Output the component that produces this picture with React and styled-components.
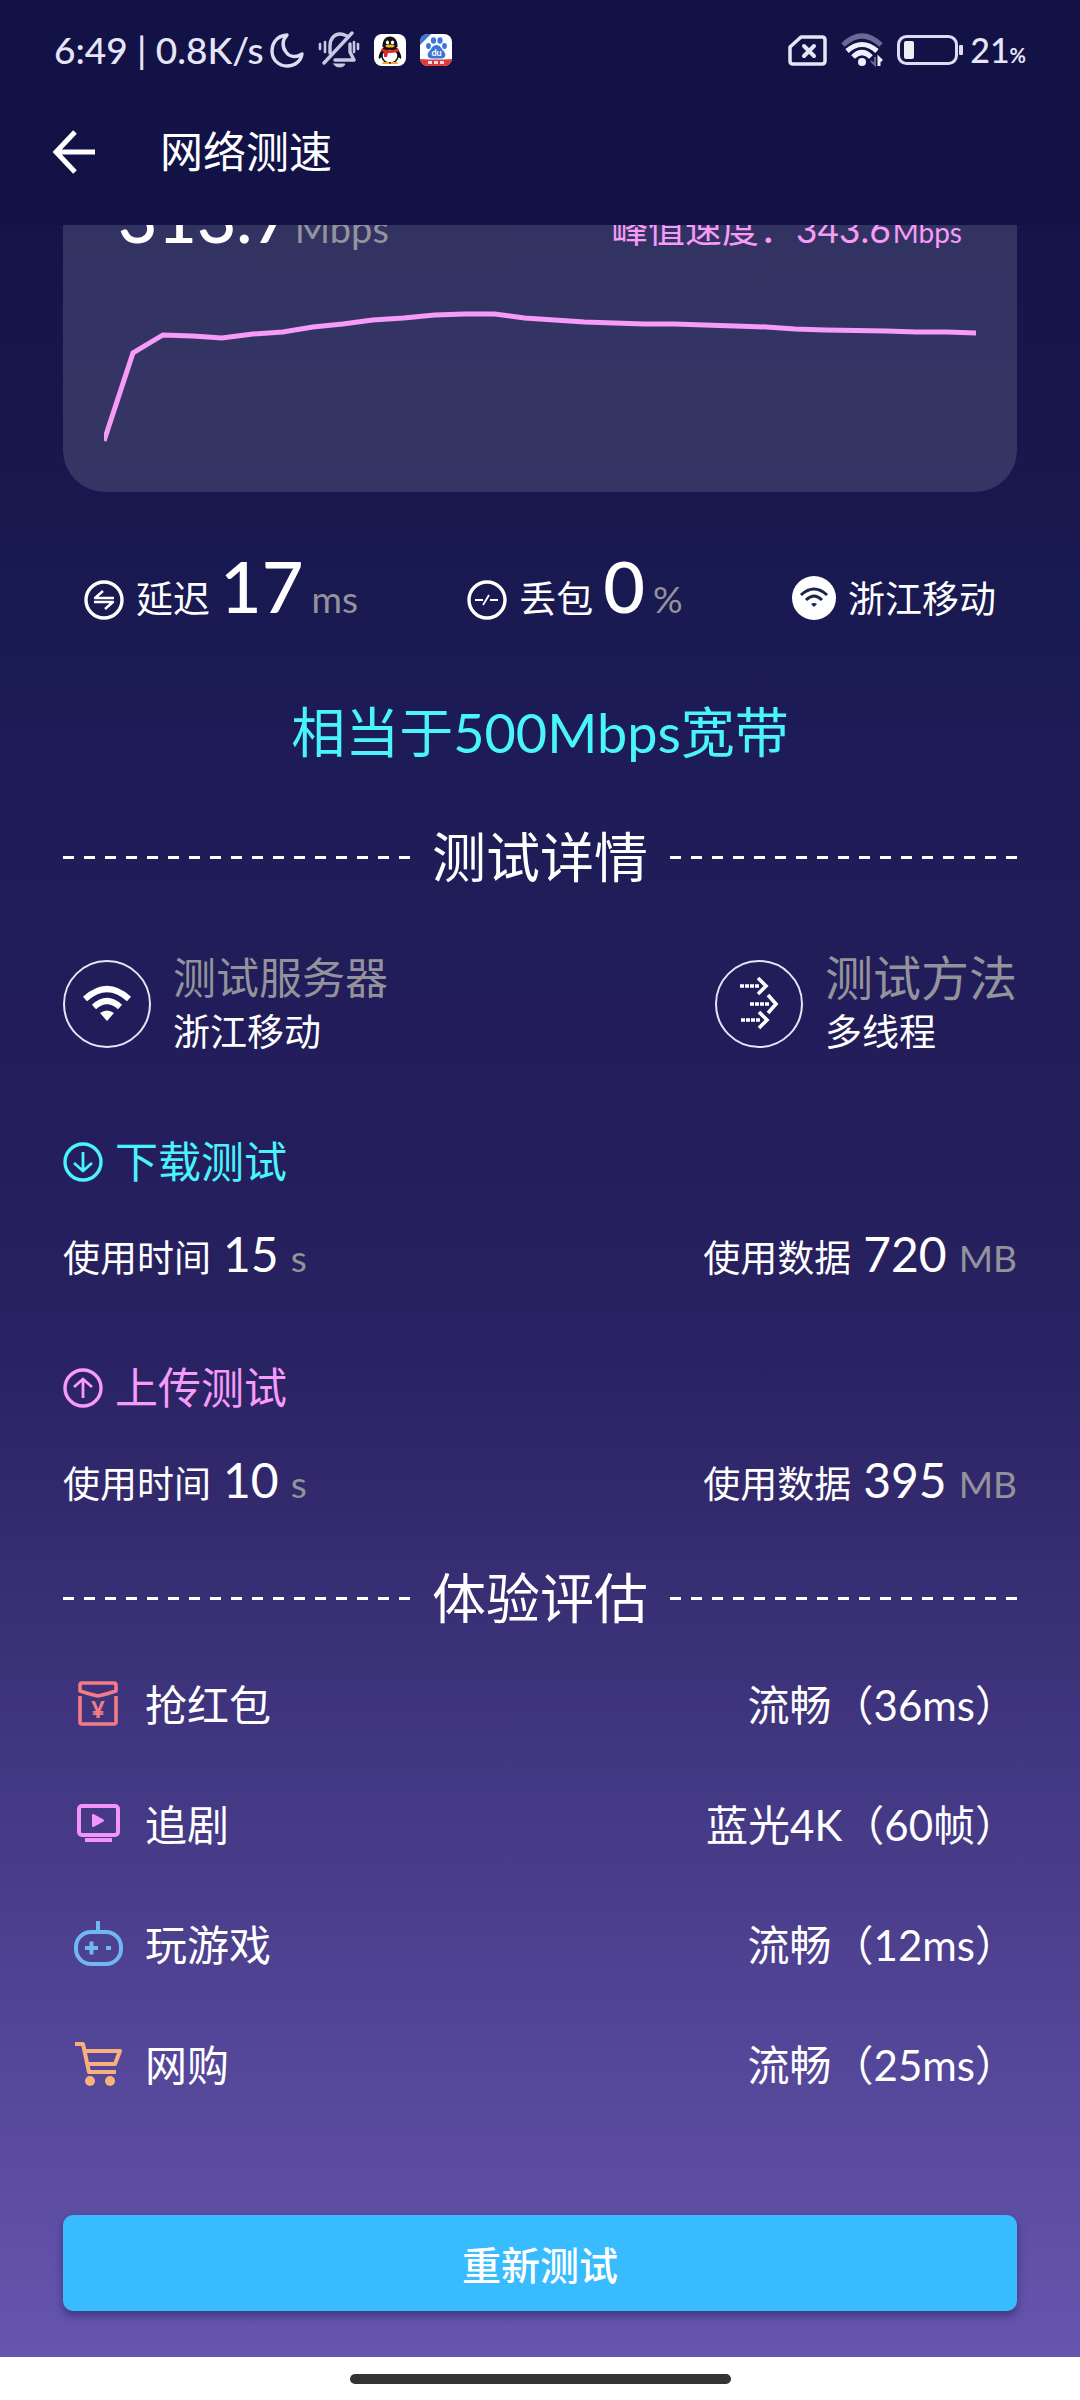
import styled, { createGlobalStyle } from 'styled-components'

const cyan = '#4af4fc';
const pink = '#f79bf8';
const gray = '#94939c';

const speeds = [
    [0, 131], [29, 43], [59, 25], [89, 26], [118, 28], [149, 24], [179, 22], [209, 17],
    [239, 14], [269, 10], [300, 8], [331, 5], [361, 4], [391, 4], [421, 8], [451, 10],
    [481, 12], [511, 13], [541, 14], [571, 14], [601, 15], [632, 16], [663, 17], [692, 19],
    [722, 20], [783, 21], [813, 22], [844, 22], [873, 23],
];

const tests = [
    { title: '下载测试', color: cyan, down: true, time: 15, data: 720 },
    { title: '上传测试', color: pink, down: false, time: 10, data: 395 },
];

const scenes = [
    { name: '抢红包', result: '流畅（36ms）', Icon: RedPacketIcon },
    { name: '追剧', result: '蓝光4K（60帧）', Icon: TvIcon },
    { name: '玩游戏', result: '流畅（12ms）', Icon: GameIcon },
    { name: '网购', result: '流畅（25ms）', Icon: CartIcon },
];

function App() {
    return (
        <Screen>
            <GlobalStyle />

            <Header>
                <StatusBar>
                    <StatusGroup>
                        <StatusText>6:49 | 0.8K/s</StatusText>
                        <StatusIcons>
                            <MoonIcon />
                            <BellOffIcon />
                            <QQIcon />
                            <BaiduIcon />
                        </StatusIcons>
                    </StatusGroup>
                    <StatusGroup>
                        <StatusIcons>
                            <SimIcon />
                            <StatusWifiIcon />
                            <BatteryIcon />
                        </StatusIcons>
                        <Battery>21<small>%</small></Battery>
                    </StatusGroup>
                </StatusBar>
                <AppBar>
                    <BackButton aria-label="返回">
                        <svg width="44" height="44" viewBox="0 0 44 44" fill="none" stroke="#fff" strokeWidth="5">
                            <path d="M43 22H5M23 2L4 22l19 20" />
                        </svg>
                    </BackButton>
                    <Title>网络测速</Title>
                </AppBar>
            </Header>

            <Content>
                <Card>
                    <CardRow>
                        <Average>313.7<span>Mbps</span></Average>
                        <Peak>峰值速度：343.6<span>Mbps</span></Peak>
                    </CardRow>
                    <Chart viewBox="0 0 873 134">
                        <polyline points={speeds.join(' ')} fill="none" stroke={pink} strokeWidth="5" />
                    </Chart>
                </Card>

                <Stats>
                    <Stat>
                        <DelayIcon />
                        <Label>延迟</Label>
                        <BigNumber>17</BigNumber>
                        <Unit>ms</Unit>
                    </Stat>
                    <Stat>
                        <LossIcon />
                        <Label>丢包</Label>
                        <BigNumber>0</BigNumber>
                        <Unit>%</Unit>
                    </Stat>
                    <Stat>
                        <CarrierIcon />
                        <Label>浙江移动</Label>
                    </Stat>
                </Stats>

                <Summary>相当于500Mbps宽带</Summary>

                <SectionTitle>测试详情</SectionTitle>

                <Row $top={56}>
                    <Info>
                        <Round><WifiIcon /></Round>
                        <div>
                            <InfoName>测试服务器</InfoName>
                            <InfoValue>浙江移动</InfoValue>
                        </div>
                    </Info>
                    <Info>
                        <Round><ThreadsIcon /></Round>
                        <div>
                            <InfoName $large>测试方法</InfoName>
                            <InfoValue>多线程</InfoValue>
                        </div>
                    </Info>
                </Row>

                {tests.map(({ title, color, down, time, data }) => (
                    <section key={title}>
                        <TestTitle $color={color}>
                            <ArrowIcon down={down} />
                            {title}
                        </TestTitle>
                        <Row $top={34}>
                            <Metric>
                                <Label>使用时间</Label>
                                <Number>{time}</Number>
                                <Unit>s</Unit>
                            </Metric>
                            <Metric>
                                <Label>使用数据</Label>
                                <Number>{data}</Number>
                                <Unit>MB</Unit>
                            </Metric>
                        </Row>
                    </section>
                ))}

                <SectionTitle>体验评估</SectionTitle>

                <Scenes>
                    {scenes.map(({ name, result, Icon }) => (
                        <Scene key={name}>
                            <Icon />
                            <span>{name}</span>
                            <Result>{result}</Result>
                        </Scene>
                    ))}
                </Scenes>

                <RetryButton>重新测试</RetryButton>
            </Content>

            <NavBar>
                <Pill />
            </NavBar>
        </Screen>
    )
}

export default App;

function MoonIcon() {
    return (
        <svg width="34" height="36" viewBox="0 0 34 36" fill="none" stroke="#dedcf3" strokeWidth="3.4" strokeLinejoin="round">
            <path d="M17 3C5 4 2 13 2 19c0 9 7 15 15 15 8 0 14-5 15-12-6 4-13 3-16-2-4-5-4-12 1-17z" />
        </svg>
    )
}

function BellOffIcon() {
    return (
        <svg width="42" height="38" viewBox="0 0 42 38" fill="none" stroke="#c9c8e4" strokeWidth="3.4" strokeLinecap="round" strokeLinejoin="round">
            <path d="M12 22V15c0-7 4-12 10-12 3 0 5 1 7 2M32 13v8l4 8H17M34 2L6 32" />
            <path d="M2 13v5M7 11v10M36 11v10M40 13v5" strokeWidth="2.6" />
            <path d="M16 33h11c-1 4-10 4-11 0z" fill="#c9c8e4" strokeWidth="1" />
        </svg>
    )
}

function QQIcon() {
    return (
        <svg width="32" height="32" viewBox="0 0 32 32">
            <rect width="32" height="32" rx="8" fill="#fff" />
            <path d="M9 14c-3 4-5 8-4 11l3-2h16l3 2c1-3-1-7-4-11z" fill="#111" />
            <ellipse cx="16" cy="22" rx="8" ry="7" fill="#fff" stroke="#111" strokeWidth="1.5" />
            <path d="M9 28h6v2H8zM17 28h6l1 2h-7z" fill="#f6a623" />
            <path d="M8.5 13c-1-14 16-14 15 0-4 3-11 3-15 0z" fill="#111" />
            <ellipse cx="13.5" cy="8.5" rx="1.6" ry="2" fill="#fff" />
            <ellipse cx="18.5" cy="8.5" rx="1.6" ry="2" fill="#fff" />
            <ellipse cx="16" cy="12" rx="4.5" ry="1.5" fill="#f6b320" />
            <path d="M8 14c5 3 11 3 16 0l1 3c-4 2-8 2-11 2l-1 4h-3v-5l-3-1z" fill="#e3262b" />
        </svg>
    )
}

function BaiduIcon() {
    return (
        <svg width="32" height="32" viewBox="0 0 32 32">
            <defs>
                <clipPath id="tile"><rect width="32" height="32" rx="8" /></clipPath>
            </defs>
            <g clipPath="url(#tile)">
                <rect width="32" height="32" fill="#fff" />
                <g fill="#3d74d8">
                    <path d="M0 0h11L0 11z" />
                    <ellipse cx="13.5" cy="6.5" rx="2.6" ry="3.3" />
                    <ellipse cx="20" cy="6.5" rx="2.6" ry="3.3" />
                    <ellipse cx="8.5" cy="12" rx="2.4" ry="3" />
                    <ellipse cx="24.5" cy="12" rx="2.4" ry="3" />
                    <path d="M16.5 11c4 0 5 4 7 6 4 4 1 8-3 7.5h-8c-4 .5-7-3.5-3-7.5 2-2 3-6 7-6z" />
                </g>
                <path d="M0 25q16 1 32 0v7H0z" fill="#df3a3e" />
                <path d="M8 27h4v3H8zM14 27h4v3h-4zM20 27h4v3h-4z" fill="#fbdcdc" />
                <text x="16.5" y="22" fontSize="9" fontWeight="700" fill="#fff" textAnchor="middle">du</text>
            </g>
        </svg>
    )
}

function SimIcon() {
    return (
        <svg width="39" height="32" viewBox="0 0 39 32" fill="none" stroke="#e6e5f8" strokeWidth="3.5" strokeLinejoin="round">
            <path d="M13 3h21q3 0 3 3v21q0 3-3 3H5q-3 0-3-3V13z" />
            <path d="M16 12l10 10M26 12L16 22" strokeLinecap="round" strokeWidth="4" />
        </svg>
    )
}

function StatusWifiIcon() {
    return (
        <svg width="42" height="34" viewBox="0 0 42 34" fill="none" stroke="#f0effc" strokeWidth="5">
            <path d="M2 12Q21-6 40 12" stroke="#6a6994" />
            <path d="M6 18Q21 5 36 18M12 24Q21 15 30 24" />
            <circle cx="21" cy="29" r="4" fill="#f0effc" stroke="none" />
            <path d="M34 24v8l-4-4" stroke="#6a6994" strokeWidth="2" />
            <path d="M38 33v-8l3 3" strokeWidth="3" />
        </svg>
    )
}

function BatteryIcon() {
    return (
        <svg width="67" height="30" viewBox="0 0 67 30">
            <rect x="1.5" y="1.5" width="58" height="27" rx="8" fill="none" stroke="#dedcf3" strokeWidth="3" />
            <rect x="7" y="6" width="10" height="18" rx="2" fill="#eeedf2" />
            <rect x="62" y="10" width="4" height="10" rx="1" fill="#dedcf3" />
        </svg>
    )
}

function DelayIcon() {
    return (
        <svg width="40" height="40" viewBox="0 0 40 40" fill="none" stroke="#fff">
            <circle cx="20" cy="20" r="18" strokeWidth="3.4" />
            <path d="M30 18H11l8-7M10 22h19l-8 7" strokeWidth="2.4" strokeLinejoin="round" />
        </svg>
    )
}

function LossIcon() {
    return (
        <svg width="40" height="40" viewBox="0 0 40 40" fill="none" stroke="#fff">
            <circle cx="20" cy="20" r="18" strokeWidth="3.4" />
            <path d="M8 20h8M23 20h8M16 25l6-10" strokeWidth="1.8" />
        </svg>
    )
}

function CarrierIcon() {
    return (
        <svg width="44" height="44" viewBox="0 0 44 44" fill="none" stroke="#1d2350" strokeWidth="3">
            <circle cx="22" cy="22" r="22" fill="#fff" stroke="none" />
            <path d="M9 19Q22 7 35 19M14 24Q22 16 30 24" />
            <path d="M19 28q3-2 6 0l-3 3z" fill="#1d2350" stroke="none" />
        </svg>
    )
}

function WifiIcon() {
    return (
        <svg width="50" height="38" viewBox="0 0 50 38" fill="none" stroke="#fff" strokeWidth="6">
            <path d="M3 14Q25-6 47 14M12 22Q25 10 38 22" />
            <path d="M18 28q7-5 14 0l-7 8z" fill="#fff" stroke="none" />
        </svg>
    )
}

function ThreadsIcon() {
    return (
        <svg width="40" height="54" viewBox="0 0 40 54" fill="none" stroke="#fff" strokeWidth="3.6">
            <path d="M19 1l8 8-8 8M29 18l8 9-8 9M20 35l8 8-8 8" />
            <path d="M1 9h19M11 27h19M2 43h19" strokeDasharray="4 1" />
        </svg>
    )
}

function ArrowIcon({ down }) {
    return (
        <svg width="40" height="40" viewBox="0 0 40 40" fill="none" stroke="currentColor">
            <circle cx="20" cy="20" r="18" strokeWidth="3.4" />
            <path d={down ? 'M20 10v19M11 21l9 8 9-8' : 'M20 30V11M11 19l9-8 9 8'} strokeWidth="2.8" />
        </svg>
    )
}

function RedPacketIcon() {
    return (
        <svg width="50" height="50" viewBox="0 0 50 50" fill="none" stroke="#f37b84" strokeWidth="3.6" strokeLinejoin="round">
            <path d="M9 5h32q2 0 2 2v6q-9 3-18 5-9-2-18-5V7q0-2 2-2z" />
            <path d="M7 18v26q0 2 2 2h32q2 0 2-2V18" />
            <text x="25" y="40" fontSize="23" fontWeight="900" fill="#f37b84" stroke="none" textAnchor="middle">¥</text>
        </svg>
    )
}

function TvIcon() {
    return (
        <svg width="50" height="50" viewBox="0 0 50 50" fill="none" stroke="#f394fb" strokeWidth="4">
            <rect x="6" y="8" width="39" height="29" rx="3" />
            <path d="M12 42h27" />
            <path d="M20 17v11l10-5.5z" fill="#f394fb" strokeWidth="2" strokeLinejoin="round" />
        </svg>
    )
}

function GameIcon() {
    return (
        <svg width="50" height="50" viewBox="0 0 50 50" fill="none" stroke="#70b8f4" strokeWidth="4">
            <rect x="3" y="14" width="45" height="32" rx="15" />
            <path d="M25 3v11M12 30h13M18.5 23.5v13M33 30h5" />
        </svg>
    )
}

function CartIcon() {
    return (
        <svg width="50" height="50" viewBox="0 0 50 50" fill="none" stroke="#f8b17c" strokeWidth="4" strokeLinejoin="round">
            <path d="M2 6h8l6 28h27M12 13h35l-5 13H15" />
            <circle cx="17" cy="43" r="5" fill="#f8b17c" stroke="none" />
            <circle cx="37" cy="43" r="5" fill="#f8b17c" stroke="none" />
        </svg>
    )
}

const GlobalStyle = createGlobalStyle`
    * {
        box-sizing: border-box;
    }

    body {
        margin: 0;
        font-family: Lato, "Noto Sans CJK SC", sans-serif;
        color: white;
    }

    svg {
        display: block;
        flex: none;
    }

    h1, h2, h3, p, ul {
        margin: 0;
        padding: 0;
        font-weight: 400;
    }
`;

const Screen = styled.div`
    display: flex;
    flex-direction: column;
    min-height: 100vh;
    background: linear-gradient(#121248 0%, #18184f 21%, #1e1d58 34%, #241d5b 47%, #2a2363 57%, #6655af 98%);
`;

const Header = styled.header`
    background-color: #121246;
`;

const StatusBar = styled.div`
    display: flex;
    justify-content: space-between;
    padding: 28px 54px;
    color: #e6e5f8;
`;

const StatusGroup = styled.div`
    display: flex;
    align-items: center;
    gap: 6px;
`;

const StatusIcons = styled.div`
    display: flex;
    align-items: center;
    gap: 14px;
`;

const StatusText = styled.span`
    font-size: 37px;
    font-weight: 500;
    line-height: 44px;
`;

const Battery = styled(StatusText)`
    font-size: 34px;

    small {
        font-size: 20px;
        font-weight: 700;
        line-height: 20px;
    }
`;

const AppBar = styled.div`
    display: flex;
    align-items: center;
    gap: 64px;
    padding: 22px 52px 43px;
`;

const BackButton = styled.button`
    padding: 0;
    border: none;
    background: none;
    cursor: pointer;
`;

const Title = styled.h1`
    font-size: 43px;
    line-height: 60px;
`;

const Content = styled.main`
    flex: 1;
    padding: 0 63px 46px;
    overflow: hidden;
`;

/* scrolled partly under the header */
const Card = styled.section`
    margin-top: -48px;
    padding: 0 41px 48px;
    border-radius: 42px;
    background-color: rgba(255, 255, 255, 0.13);
`;

const CardRow = styled.div`
    display: flex;
    justify-content: space-between;
    align-items: baseline;
    padding: 0 14px 38px;
    line-height: 80px;
`;

const Average = styled.span`
    font-size: 68px;
    font-weight: 500;

    span {
        margin-left: 3px;
        font-size: 38px;
        font-weight: 400;
        color: ${gray};
    }
`;

const Peak = styled.span`
    font-size: 37px;
    color: ${pink};

    span {
        margin-left: 2px;
        font-size: 28px;
    }
`;

const Chart = styled.svg`
    width: 100%;
`;

const Stats = styled.div`
    display: flex;
    justify-content: space-between;
    align-items: flex-end;
    margin-top: 57px;
    padding: 0 21px;
`;

const Stat = styled.div`
    display: flex;
    align-items: baseline;

    svg {
        align-self: flex-end;
        margin: 0 12px 3px 0;
    }
`;

const Label = styled.span`
    font-size: 37px;
    line-height: 48px;
`;

const BigNumber = styled.span`
    margin: 0 8px 0 10px;
    font-size: 72px;
    font-weight: 500;
    line-height: 72px;
`;

const Number = styled.span`
    margin: 0 12px;
    font-size: 48px;
    line-height: 60px;
`;

const Unit = styled.span`
    font-size: 37px;
    line-height: 48px;
    color: ${gray};
`;

const Summary = styled.p`
    margin-top: 74px;
    font-size: 54px;
    line-height: 72px;
    text-align: center;
    color: ${cyan};
`;

const SectionTitle = styled.h2`
    display: flex;
    align-items: center;
    gap: 22px;
    margin-top: 53px;
    font-size: 54px;
    line-height: 72px;

    &::before, &::after {
        content: "";
        flex: 1;
        height: 3px;
        background: repeating-linear-gradient(90deg, white 0 11px, transparent 11px 21px);
    }
`;

const Row = styled.div`
    display: flex;
    justify-content: space-between;
    margin-top: ${({ $top }) => $top}px;
`;

const Info = styled.div`
    display: flex;
    align-items: center;
    gap: 22px;
`;

const Round = styled.div`
    display: flex;
    align-items: center;
    justify-content: center;
    width: 88px;
    height: 88px;
    border: 2px solid #e6e5f8;
    border-radius: 50%;
`;

const InfoName = styled.p`
    font-size: ${({ $large }) => $large ? 48 : 43}px;
    line-height: 56px;
    color: ${gray};
`;

const InfoValue = styled.p`
    font-size: 37px;
    line-height: 52px;
`;

const TestTitle = styled.h3`
    display: flex;
    align-items: center;
    gap: 12px;
    margin-top: 76px;
    font-size: 43px;
    line-height: 56px;
    color: ${({ $color }) => $color};
`;

const Metric = styled.div`
    display: flex;
    align-items: baseline;
`;

const Scenes = styled.ul`
    margin-top: 8px;
    list-style: none;
`;

const Scene = styled.li`
    display: flex;
    align-items: center;
    gap: 22px;
    height: 120px;
    padding-left: 10px;
    font-size: 42px;
`;

const Result = styled.span`
    margin-left: auto;
`;

const RetryButton = styled.button`
    display: block;
    width: 100%;
    height: 96px;
    margin-top: 92px;
    border: none;
    border-radius: 10px;
    background-color: #38bbff;
    box-shadow: 0 5px 8px rgba(30, 30, 90, 0.5);
    font-family: inherit;
    font-size: 39px;
    font-weight: 500;
    color: white;
    cursor: pointer;
`;

const NavBar = styled.footer`
    display: flex;
    justify-content: center;
    padding: 17px 0 16px;
    background-color: white;
`;

const Pill = styled.div`
    width: 381px;
    height: 10px;
    border-radius: 5px;
    background-color: #333;
`;
